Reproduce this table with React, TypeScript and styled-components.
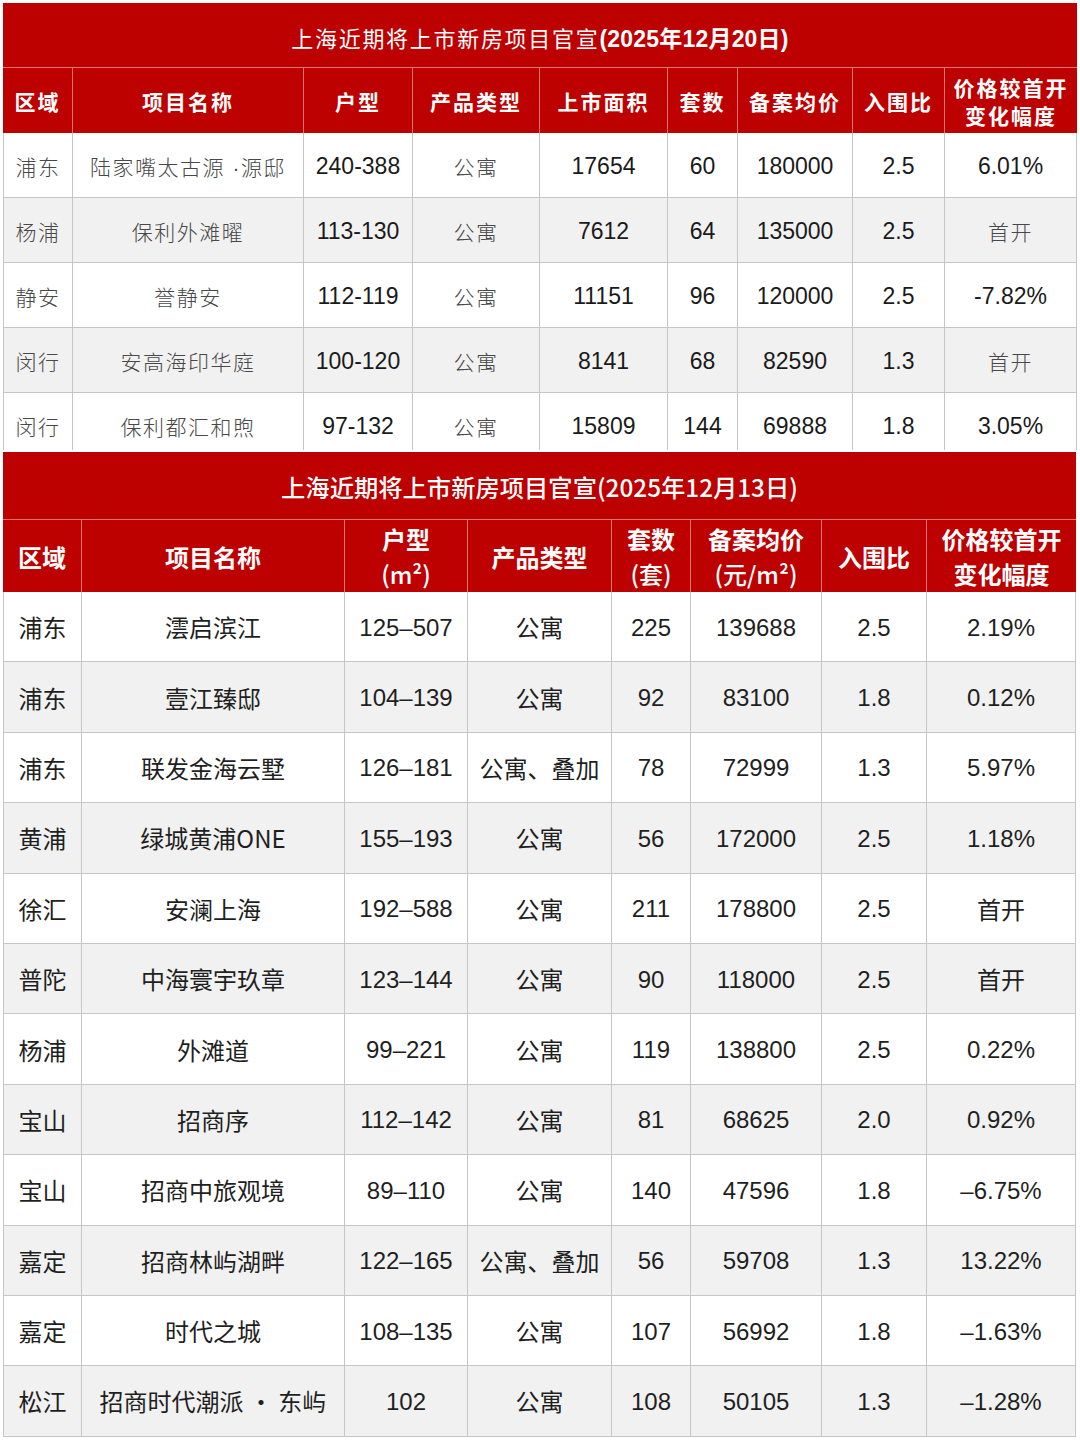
import React from "react";
import styled, { createGlobalStyle, css } from "styled-components";

const GlobalStyle = createGlobalStyle`
  html, body { margin: 0; padding: 0; background: #ffffff; }
  body { font-family: "Noto Sans CJK SC", "Noto Sans", sans-serif; }
  * { box-sizing: border-box; }
`;

const RED = "#bd0000";
const GRID = "#c6c6c6";
const PINK = "#e27373";
const ALT = "#f1f1f1";

const Page = styled.div`
  width: 1080px;
  padding: 3px 0 0 3px;
  display: flex;
  flex-direction: column;
  gap: 2px;
`;

const Clip = styled.div<{ $height: number }>`
  height: ${(p) => p.$height}px;
  overflow: hidden;
`;

const Sheet = styled.div<{ $cols: string; $title: number; $head: number; $row: number }>`
  display: grid;
  grid-template-columns: ${(p) => p.$cols};
  grid-template-rows: ${(p) => p.$title}px ${(p) => p.$head}px;
  grid-auto-rows: ${(p) => p.$row}px;
`;

const TitleBar = styled.div<{ $variant: "old" | "new" }>`
  grid-column: 1 / -1;
  background: ${RED};
  color: #ffffff;
  display: flex;
  align-items: center;
  justify-content: center;
  border-bottom: 1px solid ${PINK};
  ${(p) =>
    p.$variant === "old"
      ? css`
          font-size: 22px;
          letter-spacing: 1.7px;
          font-weight: 400;
          padding-top: 4px;
        `
      : css`
          font-size: 24.3px;
          font-weight: 500;
          padding-top: 2px;
        `}
`;

const DateBold = styled.span`
  font-family: "Liberation Sans", "Noto Sans CJK SC", sans-serif;
  font-weight: 700;
  letter-spacing: 0.2px;
  font-size: 23px;
`;

const HeadCell = styled.div<{ $variant: "old" | "new"; $last?: boolean }>`
  background: ${RED};
  color: #ffffff;
  display: flex;
  flex-direction: column;
  align-items: center;
  justify-content: center;
  text-align: center;
  border-right: ${(p) => (p.$last ? "none" : `1px solid ${PINK}`)};
  ${(p) =>
    p.$variant === "old"
      ? css`
          font-size: 21px;
          font-weight: 700;
          letter-spacing: 2px;
          line-height: 28px;
        `
      : css`
          font-size: 24px;
          font-weight: 700;
          line-height: 35px;
        `}
`;

const Unit = styled.span`
  font-weight: 500;
`;

const BodyCell = styled.div<{ $variant: "old" | "new"; $alt: boolean; $lead: boolean; $num: boolean }>`
  background: ${(p) => (p.$alt ? ALT : "#ffffff")};
  display: flex;
  align-items: center;
  justify-content: center;
  white-space: nowrap;
  border-right: 1.5px solid ${GRID};
  border-bottom: 1.5px solid ${GRID};
  border-left: ${(p) => (p.$lead ? `1.5px solid ${GRID}` : "none")};
  ${(p) =>
    p.$variant === "old"
      ? p.$num
        ? css`
            font-family: "Liberation Sans", "Noto Sans CJK SC", sans-serif;
            font-size: 23px;
            color: #1a1a1a;
            padding-top: 3px;
          `
        : css`
            font-family: "Liberation Sans", "Noto Sans CJK SC", sans-serif;
            font-size: 21px;
            font-weight: 300;
            letter-spacing: 1.5px;
            color: #484848;
            padding-top: 2px;
          `
      : p.$num
      ? css`
          font-family: "Liberation Sans", "Noto Sans CJK SC", sans-serif;
          font-size: 24px;
          color: #1f1f1f;
          padding-top: 2px;
        `
      : css`
          font-family: "Noto Sans CJK SC", sans-serif;
          font-size: 24px;
          color: #1f1f1f;
        `}
`;

type Row = string[];

const oldHead: React.ReactNode[] = [
  "区域",
  "项目名称",
  "户型",
  "产品类型",
  "上市面积",
  "套数",
  "备案均价",
  "入围比",
  <>
    <span>价格较首开</span>
    <span>变化幅度</span>
  </>,
];

const oldRows: Row[] = [
  ["浦东", "陆家嘴太古源 ·源邸", "240-388", "公寓", "17654", "60", "180000", "2.5", "6.01%"],
  ["杨浦", "保利外滩曜", "113-130", "公寓", "7612", "64", "135000", "2.5", "首开"],
  ["静安", "誉静安", "112-119", "公寓", "11151", "96", "120000", "2.5", "-7.82%"],
  ["闵行", "安高海印华庭", "100-120", "公寓", "8141", "68", "82590", "1.3", "首开"],
  ["闵行", "保利都汇和煦", "97-132", "公寓", "15809", "144", "69888", "1.8", "3.05%"],
];

const newHead: React.ReactNode[] = [
  "区域",
  "项目名称",
  <>
    <span>户型</span>
    <Unit>(m²)</Unit>
  </>,
  "产品类型",
  <>
    <span>套数</span>
    <Unit>(套)</Unit>
  </>,
  <>
    <span>备案均价</span>
    <Unit>(元/m²)</Unit>
  </>,
  "入围比",
  <>
    <span>价格较首开</span>
    <span>变化幅度</span>
  </>,
];

const newRows: Row[] = [
  ["浦东", "澐启滨江", "125–507", "公寓", "225", "139688", "2.5", "2.19%"],
  ["浦东", "壹江臻邸", "104–139", "公寓", "92", "83100", "1.8", "0.12%"],
  ["浦东", "联发金海云墅", "126–181", "公寓、叠加", "78", "72999", "1.3", "5.97%"],
  ["黄浦", "绿城黄浦ONE", "155–193", "公寓", "56", "172000", "2.5", "1.18%"],
  ["徐汇", "安澜上海", "192–588", "公寓", "211", "178800", "2.5", "首开"],
  ["普陀", "中海寰宇玖章", "123–144", "公寓", "90", "118000", "2.5", "首开"],
  ["杨浦", "外滩道", "99–221", "公寓", "119", "138800", "2.5", "0.22%"],
  ["宝山", "招商序", "112–142", "公寓", "81", "68625", "2.0", "0.92%"],
  ["宝山", "招商中旅观境", "89–110", "公寓", "140", "47596", "1.8", "–6.75%"],
  ["嘉定", "招商林屿湖畔", "122–165", "公寓、叠加", "56", "59708", "1.3", "13.22%"],
  ["嘉定", "时代之城", "108–135", "公寓", "107", "56992", "1.8", "–1.63%"],
  ["松江", "招商时代潮派 ・ 东屿", "102", "公寓", "108", "50105", "1.3", "–1.28%"],
];

const isNumeric = (s: string) => /^[-–0-9.%]+$/.test(s);

export default function App() {
  return (
    <>
      <GlobalStyle />
      <Page>
        <Clip $height={447}>
          <Sheet
            $cols="70px 231px 109px 127px 128px 70px 115px 92px 132px"
            $title={65}
            $head={65}
            $row={65}
          >
            <TitleBar $variant="old">
              上海近期将上市新房项目官宣<DateBold>(2025年12月20日)</DateBold>
            </TitleBar>
            {oldHead.map((h, i) => (
              <HeadCell key={`oh${i}`} $variant="old" $last={i === oldHead.length - 1}>
                {h}
              </HeadCell>
            ))}
            {oldRows.map((r, ri) =>
              r.map((c, ci) => (
                <BodyCell
                  key={`o${ri}-${ci}`}
                  $variant="old"
                  $alt={ri % 2 === 1}
                  $lead={ci === 0}
                  $num={isNumeric(c)}
                >
                  {c}
                </BodyCell>
              ))
            )}
          </Sheet>
        </Clip>
        <Sheet
          $cols="79px 263px 123px 144px 79px 131px 105px 149px"
          $title={68}
          $head={72}
          $row={70.4}
        >
          <TitleBar $variant="new">上海近期将上市新房项目官宣(2025年12月13日)</TitleBar>
          {newHead.map((h, i) => (
            <HeadCell key={`nh${i}`} $variant="new" $last={i === newHead.length - 1}>
              {h}
            </HeadCell>
          ))}
          {newRows.map((r, ri) =>
            r.map((c, ci) => (
              <BodyCell
                key={`n${ri}-${ci}`}
                $variant="new"
                $alt={ri % 2 === 1}
                $lead={ci === 0}
                $num={isNumeric(c)}
              >
                {c}
              </BodyCell>
            ))
          )}
        </Sheet>
      </Page>
    </>
  );
}
